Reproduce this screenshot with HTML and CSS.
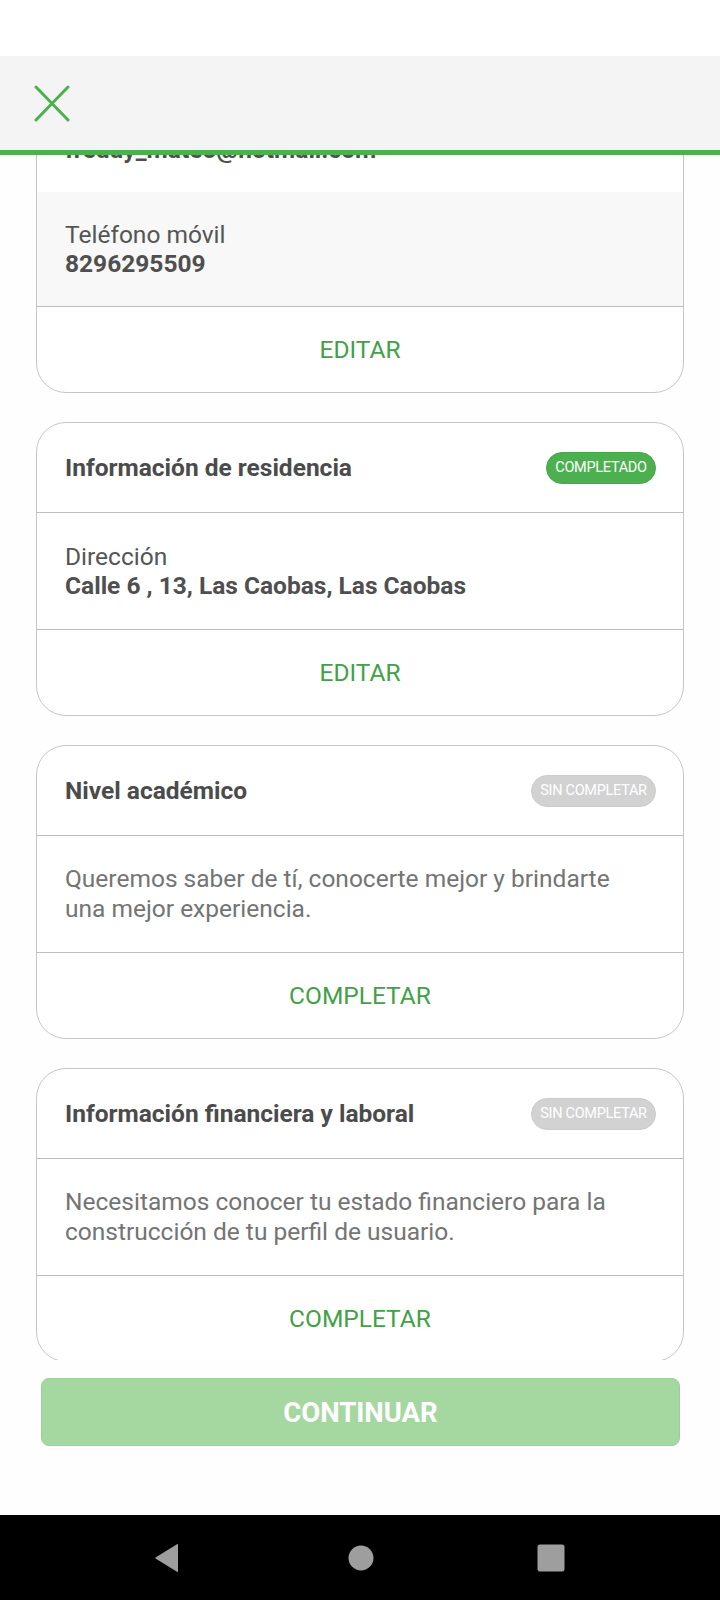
FILE: index.html
```html
<!DOCTYPE html>
<html lang="es">
<head>
<meta charset="utf-8">
<title>Perfil</title>
<link rel="stylesheet" href="styles.css">
</head>
<body>
<div class="screen">
  <div class="statusbar"></div>
  <header class="topbar">
    <svg class="close" width="36" height="37" viewBox="0 0 36 37">
      <path d="M2 2 L34 35 M34 2 L2 35" stroke="#4caf50" stroke-width="3" stroke-linecap="round" fill="none"/>
    </svg>
  </header>
  <main class="scroll">
    <div class="scroll-inner">
      <section class="card card-first">
        <div class="field">
          <div class="label">Correo electrónico</div>
          <div class="value">freddy_mateo@hotmail.com</div>
        </div>
        <div class="field field-alt">
          <div class="label">Teléfono móvil</div>
          <div class="value">8296295509</div>
        </div>
        <div class="card-foot">EDITAR</div>
      </section>

      <section class="card">
        <div class="card-head">
          <div class="title">Información de residencia</div>
          <span class="badge badge-done">COMPLETADO</span>
        </div>
        <div class="field">
          <div class="label">Dirección</div>
          <div class="value">Calle 6 , 13, Las Caobas, Las Caobas</div>
        </div>
        <div class="card-foot">EDITAR</div>
      </section>

      <section class="card">
        <div class="card-head">
          <div class="title">Nivel académico</div>
          <span class="badge badge-todo">SIN COMPLETAR</span>
        </div>
        <div class="desc">Queremos saber de tí, conocerte mejor y brindarte una mejor experiencia.</div>
        <div class="card-foot">COMPLETAR</div>
      </section>

      <section class="card">
        <div class="card-head">
          <div class="title">Información financiera y laboral</div>
          <span class="badge badge-todo">SIN COMPLETAR</span>
        </div>
        <div class="desc">Necesitamos conocer tu estado financiero para la construcción de tu perfil de usuario.</div>
        <div class="card-foot">COMPLETAR</div>
      </section>
    </div>
  </main>
  <div class="actions">
    <button class="continue" type="button">CONTINUAR</button>
  </div>
  <nav class="navbar">
    <svg width="26" height="30" viewBox="0 0 26 30"><path d="M24 1.5 L24 28.5 Q24 29.5 23 28.8 L1.5 15.6 Q1 15 1.5 14.4 L23 1.2 Q24 0.5 24 1.5 Z" fill="#9e9e9e"/></svg>
    <svg width="26" height="26" viewBox="0 0 26 26"><circle cx="13" cy="13" r="12.5" fill="#9e9e9e"/></svg>
    <svg width="28" height="28" viewBox="0 0 28 28"><rect x="0.5" y="0.5" width="27" height="27" rx="2.5" fill="#9e9e9e"/></svg>
  </nav>
</div>
</body>
</html>
```

FILE: styles.css
```css
* { box-sizing: border-box; }
html, body { margin: 0; padding: 0; background: #ffffff; }
body { font-family: Roboto, "Noto Sans", "Liberation Sans", sans-serif; }

.screen {
  width: 720px;
  height: 1600px;
  display: flex;
  flex-direction: column;
  overflow: hidden;
  background: #fefefe;
}

.statusbar { height: 56px; background: #ffffff; flex: none; }

.topbar {
  height: 99px;
  flex: none;
  background: #f4f4f4;
  border-bottom: 5px solid #4caf50;
  display: flex;
  align-items: center;
  padding-left: 34px;
  position: relative;
  z-index: 2;
}
.close { display: block; margin-top: 1px; }

.scroll {
  height: 1205px;
  flex: none;
  overflow: hidden;
}
.scroll-inner {
  padding: 0 36px;
  display: flex;
  flex-direction: column;
  gap: 29px;
}

.card {
  background: #ffffff;
  border: 1px solid #c6c6c6;
  border-radius: 30px;
  overflow: hidden;
  flex: none;
}
.card-first { margin-top: -78px; }

.card-head {
  height: 90px;
  display: flex;
  align-items: center;
  justify-content: space-between;
  padding: 0 27px 0 28px;
  border-bottom: 1px solid #bdbdbd;
}
.title {
  font-size: 24.5px;
  font-weight: 700;
  color: #4b4b4b;
}

.badge {
  height: 32px;
  border-radius: 16px;
  font-size: 14.5px;
  color: #ffffff;
  display: flex;
  align-items: center;
  justify-content: center;
  letter-spacing: -0.3px;
}
.badge-done {
  width: 110px;
  background: #4caf50;
  border: 1px solid #47a84b;
}
.badge-todo {
  width: 125px;
  background: #d2d2d2;
  border: 1px solid #cbcbcb;
}

.field {
  height: 116px;
  padding: 29px 28px;
  font-size: 24.5px;
  line-height: 29px;
  color: #555555;
}
.card-first .field { height: 114px; padding: 28px 28px; }
.field-alt { background: #f7f8f7; }
.label { font-weight: 400; }
.value { font-weight: 700; color: #4f4f4f; white-space: nowrap; }

.desc {
  height: 116px;
  padding: 28px 44px 28px 28px;
  font-size: 24.5px;
  line-height: 30px;
  color: #747474;
}

.card-foot {
  height: 86px;
  border-top: 1px solid #bdbdbd;
  display: flex;
  align-items: center;
  justify-content: center;
  font-size: 24.5px;
  color: #43a047;
}

.actions {
  height: 155px;
  flex: none;
  padding: 18px 40px 0 41px;
}
.continue {
  width: 100%;
  height: 68px;
  border: 1px solid #9bcf96;
  border-radius: 8px;
  background: #a5d8a1;
  color: #ffffff;
  font-family: Roboto, "Noto Sans", "Liberation Sans", sans-serif;
  font-size: 27.5px;
  font-weight: 700;
  padding: 0;
}

.navbar {
  height: 85px;
  flex: none;
  background: #000000;
  display: flex;
  align-items: center;
  padding-left: 154px;
}
.navbar svg { display: block; flex: none; }
.navbar svg:nth-child(1) { margin-right: 168px; }
.navbar svg:nth-child(2) { margin-right: 163px; }
```
